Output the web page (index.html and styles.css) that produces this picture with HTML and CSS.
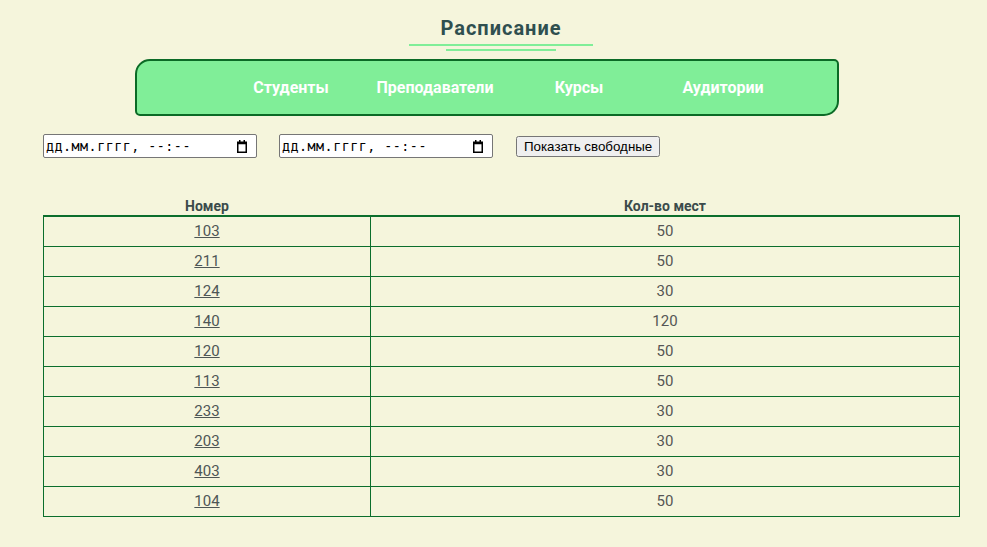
FILE: index.html
```html
<!DOCTYPE html>
<html lang="ru">
<head>
<meta charset="utf-8">
<title>Расписание</title>
<link rel="stylesheet" href="styles.css">
</head>
<body>
<header class="page-head">
  <h1 class="title">Расписание</h1>
  <div class="rule rule-long"></div>
  <div class="rule rule-short"></div>
</header>
<nav class="nav">
  <a class="nav-item" href="#">Студенты</a>
  <a class="nav-item" href="#">Преподаватели</a>
  <a class="nav-item" href="#">Курсы</a>
  <a class="nav-item" href="#">Аудитории</a>
</nav>
<form class="filter">
  <label class="dt-wrap">
    <input class="dt" type="text" placeholder="дд.мм.гггг, --:--">
    <svg class="cal" width="10" height="13" viewBox="0 0 10 13" aria-hidden="true">
      <rect x="2" y="0" width="1.5" height="2.5" fill="#000"/>
      <rect x="6.5" y="0" width="1.5" height="2.5" fill="#000"/>
      <rect x="0.75" y="2.25" width="8.5" height="10" fill="none" stroke="#000" stroke-width="1.5"/>
      <rect x="0.75" y="2.25" width="8.5" height="2" fill="#000"/>
    </svg>
  </label>
  <label class="dt-wrap">
    <input class="dt" type="text" placeholder="дд.мм.гггг, --:--">
    <svg class="cal" width="10" height="13" viewBox="0 0 10 13" aria-hidden="true">
      <rect x="2" y="0" width="1.5" height="2.5" fill="#000"/>
      <rect x="6.5" y="0" width="1.5" height="2.5" fill="#000"/>
      <rect x="0.75" y="2.25" width="8.5" height="10" fill="none" stroke="#000" stroke-width="1.5"/>
      <rect x="0.75" y="2.25" width="8.5" height="2" fill="#000"/>
    </svg>
  </label>
  <button class="btn" type="button">Показать свободные</button>
</form>
<table class="rooms">
  <thead>
    <tr><th class="col-num">Номер</th><th>Кол-во мест</th></tr>
  </thead>
  <tbody>
    <tr><td><a href="#">103</a></td><td>50</td></tr>
    <tr><td><a href="#">211</a></td><td>50</td></tr>
    <tr><td><a href="#">124</a></td><td>30</td></tr>
    <tr><td><a href="#">140</a></td><td>120</td></tr>
    <tr><td><a href="#">120</a></td><td>50</td></tr>
    <tr><td><a href="#">113</a></td><td>50</td></tr>
    <tr><td><a href="#">233</a></td><td>30</td></tr>
    <tr><td><a href="#">203</a></td><td>30</td></tr>
    <tr><td><a href="#">403</a></td><td>30</td></tr>
    <tr><td><a href="#">104</a></td><td>50</td></tr>
  </tbody>
</table>
</body>
</html>
```
FILE: styles.css
```css
html, body {
  margin: 0;
  padding: 0;
  background: #f5f5dc;
  font-family: Roboto, "Liberation Sans", sans-serif;
}
body {
  width: 987px;
  height: 547px;
  overflow: hidden;
}
.page-head {
  display: flex;
  flex-direction: column;
  align-items: center;
  padding-top: 16px;
  margin-left: 15px;
}
.title {
  margin: 0;
  font-size: 20px;
  line-height: 24px;
  font-weight: 700;
  color: #2f4f4f;
  letter-spacing: 1px;
}
.rule {
  height: 2px;
  background: #80ee98;
}
.rule-long {
  width: 184px;
  margin-top: 4px;
}
.rule-short {
  width: 110px;
  margin-top: 3px;
}
.nav {
  display: flex;
  box-sizing: border-box;
  width: 704px;
  height: 57px;
  margin: 8px 0 0 135px;
  padding-left: 82px;
  align-items: center;
  background: #80ee98;
  border: 2px solid #0b6a26;
  border-radius: 15px 5px 15px 5px;
}
.nav-item {
  width: 144px;
  text-align: center;
  color: #fff;
  font-weight: 700;
  font-size: 16px;
  text-decoration: none;
}
.filter {
  display: flex;
  align-items: center;
  gap: 22px;
  margin: 18px 0 0 43px;
  height: 24px;
}
.dt-wrap {
  position: relative;
  display: block;
  width: 214px;
  height: 24px;
}
.dt {
  box-sizing: border-box;
  width: 214px;
  height: 24px;
  margin: 0;
  padding: 1px 2px 1px 2px;
  background: #fff;
  border: 1px solid #767676;
  border-radius: 2px;
  font-family: "DejaVu Sans Mono", monospace;
  font-size: 13.33px;
  letter-spacing: 0.5px;
  color: #000;
}
.dt::placeholder {
  color: #000;
  opacity: 1;
}
.cal {
  position: absolute;
  left: 194px;
  top: 6px;
}
.btn {
  box-sizing: border-box;
  height: 21px;
  margin: 0 0 0 1px;
  padding: 1px 6px;
  font-family: "Liberation Sans", Arial, sans-serif;
  font-size: 13.33px;
}
.rooms {
  margin: 37px 0 0 43px;
  width: 917px;
  border-collapse: collapse;
  color: #555;
}
.rooms th {
  font-size: 14px;
  font-weight: 700;
  color: #3b4b4b;
  height: 20px;
  padding: 0;
  vertical-align: bottom;
  line-height: 18px;
  border-bottom: 2px solid #0b6e2c;
}
.rooms .col-num {
  width: 327px;
}
.rooms td {
  border: 1px solid #0b6e2c;
  height: 28px;
  padding: 0 0 1px;
  text-align: center;
  font-size: 15px;
  line-height: 18px;
}
.rooms td a {
  color: #4e5656;
  text-decoration: underline;
}
```
